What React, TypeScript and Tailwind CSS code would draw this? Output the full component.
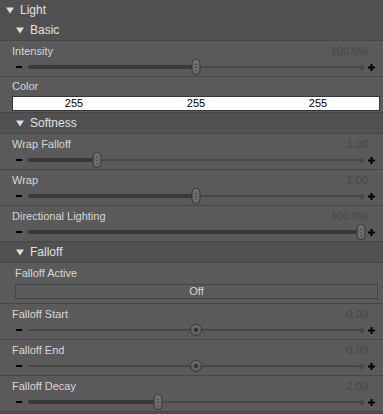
import React from 'react'

const FONT = { fontFamily: '"Liberation Sans", Arial, sans-serif' }

function Caret() {
  return (
    <svg width="8" height="7" viewBox="0 0 8 7" className="shrink-0">
      <path d="M0 0.5h8L4 6.5z" fill="#dedede" />
    </svg>
  )
}

function Header({ label, indent }: { label: string; indent: number }) {
  return (
    <div
      className="h-[20px] flex items-center gap-[6px] text-[12px] text-[#e2e2e2] bg-[#505050]"
      style={{ paddingLeft: indent }}
    >
      <Caret />
      <span className="leading-none">{label}</span>
    </div>
  )
}

function Thumb({ round }: { round?: boolean }) {
  if (round) {
    return (
      <div className="w-[12px] h-[12px] rounded-full border border-[#353535] bg-[#646464] flex items-center justify-center shadow-[inset_0_1px_0_rgba(255,255,255,0.15)]">
        <div className="w-[4px] h-[4px] rounded-full bg-[#2e2e2e]" />
      </div>
    )
  }
  return (
    <div className="w-[9px] h-[16px] rounded-full border border-[#363636] bg-[#6c6c6c] flex flex-col items-center justify-center gap-[2px] shadow-[inset_0_1px_0_rgba(255,255,255,0.2)]">
      <div className="w-[1px] h-[1px] bg-[#2e2e2e]" />
      <div className="w-[1px] h-[1px] bg-[#2e2e2e]" />
      <div className="w-[1px] h-[1px] bg-[#2e2e2e]" />
    </div>
  )
}

function Slider({ pos, filled, round }: { pos: number; filled?: boolean; round?: boolean }) {
  return (
    <div className="h-[16px] flex items-center pl-[16px] pr-[8px]">
      <div className="w-[6px] h-[2px] bg-black shrink-0" />
      <div className="relative flex-1 h-[16px] ml-[6px] mr-[4px]">
        <div className="absolute left-0 right-0 top-[7px] h-[2px] rounded-full bg-[#494949]" />
        <div className="absolute right-0 top-[5.5px] w-[5px] h-[5px] rounded-full bg-[#484848]" />
        {filled && (
          <div
            className="absolute left-0 top-[6px] h-[4px] rounded-full bg-[#393939]"
            style={{ width: `${pos * 100}%` }}
          />
        )}
        <div
          className="absolute top-0 h-[16px] flex items-center -translate-x-1/2"
          style={{ left: `${pos * 100}%` }}
        >
          <Thumb round={round} />
        </div>
      </div>
      <svg width="7" height="7" viewBox="0 0 7 7" className="shrink-0">
        <path d="M2.5 0h2v2.5H7v2H4.5V7h-2V4.5H0v-2h2.5z" fill="#000" />
      </svg>
    </div>
  )
}

function SliderRow({
  label,
  value,
  pos,
  filled,
  round,
}: {
  label: string
  value: string
  pos: number
  filled?: boolean
  round?: boolean
}) {
  return (
    <div className="h-[36px] bg-[#5a5a5a] border-b border-[#474747] flex flex-col">
      <div className="h-[16px] flex items-end justify-between pl-[12px] pr-[15px]">
        <span className="text-[#d6d6d6] leading-none">{label}</span>
        <span className="text-[#474747] leading-none">{value}</span>
      </div>
      <div className="mt-[2px]">
        <Slider pos={pos} filled={filled} round={round} />
      </div>
    </div>
  )
}

export default function App() {
  return (
    <div className="w-[383px] h-[414px] bg-[#505050] overflow-hidden text-[11px]" style={FONT}>
      <Header label="Light" indent={6} />
      <div className="border-b border-[#474747]">
        <Header label="Basic" indent={16} />
      </div>
      <SliderRow label="Intensity" value="100.0%" pos={0.5} filled />
      <div className="h-[36px] bg-[#5a5a5a] border-b border-[#474747] flex flex-col">
        <div className="h-[15px] flex items-end pl-[12px]">
          <span className="text-[#d6d6d6] leading-none">Color</span>
        </div>
        <div className="mt-[4px] ml-[12px] mr-[3px] h-[15px] bg-white border border-[#353535] grid grid-cols-3 items-center text-black">
          <span className="text-center leading-none">255</span>
          <span className="text-center leading-none">255</span>
          <span className="text-center leading-none">255</span>
        </div>
      </div>
      <div className="border-b border-[#474747]">
        <Header label="Softness" indent={16} />
      </div>
      <SliderRow label="Wrap Falloff" value="1.00" pos={0.205} filled />
      <SliderRow label="Wrap" value="1.00" pos={0.5} filled />
      <SliderRow label="Directional Lighting" value="100.0%" pos={0.992} filled />
      <div className="h-[21px] border-b border-[#474747] flex items-center">
        <Header label="Falloff" indent={16} />
      </div>
      <div className="h-[41px] bg-[#5a5a5a] border-b border-[#474747] flex flex-col">
        <div className="h-[16px] flex items-end pl-[15px]">
          <span className="text-[#d6d6d6] leading-none">Falloff Active</span>
        </div>
        <div className="mt-[5px] ml-[15px] mr-[5px] h-[15px] border border-[#444] bg-[#5a5a5a] flex items-center justify-center">
          <span className="text-[#d6d6d6] leading-none">Off</span>
        </div>
      </div>
      <SliderRow label="Falloff Start" value="0.00" pos={0.5} round />
      <SliderRow label="Falloff End" value="0.00" pos={0.5} round />
      <SliderRow label="Falloff Decay" value="2.00" pos={0.386} filled />
    </div>
  )
}
